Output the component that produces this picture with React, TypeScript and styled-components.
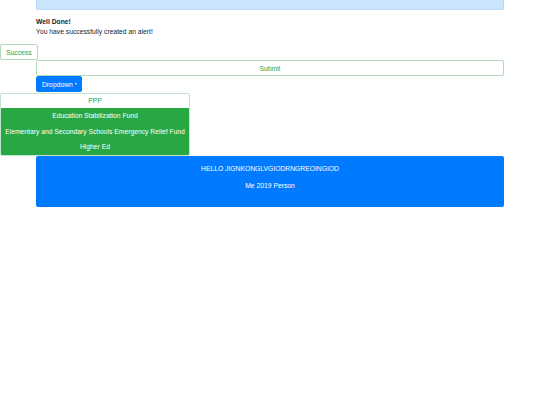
import React from 'react';
import styled, { createGlobalStyle } from 'styled-components';

const GlobalStyle = createGlobalStyle`
  body {
    margin: 0;
    background: #fff;
    font-family: "Liberation Sans", Arial, sans-serif;
    font-size: 6.75px;
    line-height: 10px;
    color: #212529;
  }
`;

const Page = styled.div`
  width: 540px;
  display: flex;
  flex-direction: column;
  align-items: flex-start;
`;

const Container = styled.div`
  margin-left: 36px;
  width: 468px;
  box-sizing: border-box;
`;

const Alert = styled.div`
  height: 10px;
  box-sizing: border-box;
  background: #cce5ff;
  border: 1px solid #b8daff;
  border-top: none;
  border-radius: 0 0 2px 2px;
`;

const Message = styled.div`
  margin: 7px 0 6.5px;
`;

const Title = styled.div`
  font-weight: bold;
`;

const OutlineButton = styled.button<{ $block?: boolean }>`
  display: block;
  box-sizing: border-box;
  height: 16px;
  padding: 1px 5px 0;
  margin: 0;
  width: ${(p) => (p.$block ? '468px' : 'auto')};
  margin-left: ${(p) => (p.$block ? '36px' : '0')};
  background: #fff;
  border: 1px solid #b3dcbd;
  border-radius: 2px;
  color: #28a745;
  font-family: inherit;
  font-size: 6.75px;
  line-height: 13px;
  text-align: center;
`;

const DropdownToggle = styled.button`
  display: flex;
  align-items: center;
  gap: 2px;
  box-sizing: border-box;
  height: 16px;
  width: 46px;
  margin: 0 0 0 36px;
  padding: 1px 5px 0;
  background: #007bff;
  border: 1px solid #007bff;
  border-radius: 2px;
  color: #fff;
  font-family: inherit;
  font-size: 6.75px;
  line-height: 13px;
`;

const Caret = styled.span`
  width: 0;
  height: 0;
  border-left: 1.5px solid transparent;
  border-right: 1.5px solid transparent;
  border-top: 2px solid #fff;
`;

const Menu = styled.div`
  width: 190px;
  margin-top: 1px;
  box-sizing: border-box;
  border: 1px solid #c7e3cd;
  border-radius: 2px;
  overflow: hidden;
  display: flex;
  flex-direction: column;
`;

const MenuItem = styled.div<{ $active?: boolean }>`
  height: ${(p) => (p.$active ? '14.5px' : '15.5px')};
  line-height: ${(p) => (p.$active ? '14.5px' : '15.5px')};
  text-align: center;
  white-space: nowrap;
  background: ${(p) => (p.$active ? '#fff' : '#28a745')};
  color: ${(p) => (p.$active ? '#28a745' : '#fff')};
`;

const Banner = styled.div`
  margin: 0 0 0 36px;
  width: 468px;
  height: 51px;
  box-sizing: border-box;
  padding-top: 8px;
  background: #007bff;
  border-radius: 2px;
  color: #fff;
  text-align: center;
  display: flex;
  flex-direction: column;
  gap: 7px;
`;

export default function App() {
  return (
    <>
      <GlobalStyle />
      <Page>
        <Container>
          <Alert />
          <Message>
            <Title>Well Done!</Title>
            <div>You have successfully created an alert!</div>
          </Message>
        </Container>
        <OutlineButton>Success</OutlineButton>
        <OutlineButton $block>Submit</OutlineButton>
        <DropdownToggle>
          Dropdown <Caret />
        </DropdownToggle>
        <Menu>
          <MenuItem $active>PPP</MenuItem>
          <MenuItem>Education Stabilization Fund</MenuItem>
          <MenuItem>Elementary and Secondary Schools Emergency Relief Fund</MenuItem>
          <MenuItem>Higher Ed</MenuItem>
        </Menu>
        <Banner>
          <div>HELLO JIGNKONGLVGIODRNGREOINGIOD</div>
          <div>Me 2019 Person</div>
        </Banner>
      </Page>
    </>
  );
}
